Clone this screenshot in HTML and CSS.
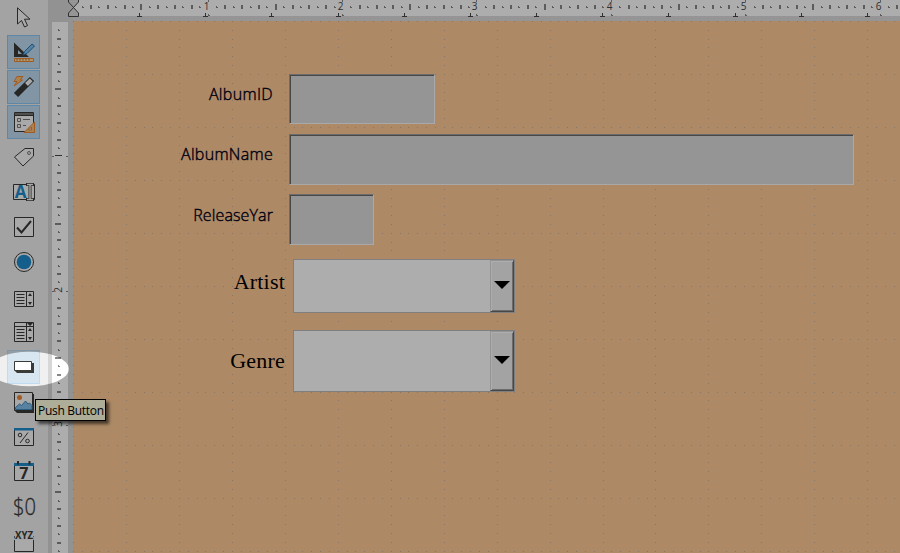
FILE: index.html
```html
<!DOCTYPE html>
<html lang="en">
<head>
<meta charset="utf-8">
<title>Form Design</title>
<link rel="stylesheet" href="styles.css">
</head>
<body>
<div class="app">
  <nav class="toolbar">
    <div class="tool"><svg viewBox="0 0 33 34"><path class="ln pale" d="M10.500 7.800V24l4-3.500 3 6.500 3-1.500-3-6.300h5.500z"/></svg></div>
    <div class="tool active"><svg viewBox="0 0 33 34"><path class="dk" fill-rule="evenodd" d="M7 7.500V22h15zM11 15v4h4z"/><path class="pencil" d="M17.500 16.500l7.500-7.500 2.500 2-7.500 7.500-4 1.500z"/><path class="orange rule" d="M7.500 23.500h19v3h-19z"/><path class="ticks" d="M10 24v1.500M13 24v1.500M16 24v1.500M19 24v1.500M22 24v1.500"/></svg></div>
    <div class="tool active"><svg viewBox="0 0 33 34"><path class="orange" d="M10 6.500h6l-3 3.500h2.500l-8.500 6 3-4.500H7z"/><path class="wand" d="M9 25L25 9"/><path class="wandtip" d="M19.500 14.500l4.700-4.700"/></svg></div>
    <div class="tool active"><svg viewBox="0 0 33 34"><path class="ln pale" d="M7.500 7.500h19v19h-19z"/><path class="bar" d="M8 8h18v2H8z"/><path class="ln" d="M8 10.500h18"/><path class="gray" d="M10.500 13.500h3v3h-3zM10.500 19.500h3v3h-3zM16 14.500h7M16 20.500h3"/><path class="orange" fill-rule="evenodd" d="M27.500 17v10.500H17zM24.500 22v3h-3z"/></svg></div>
    <div class="tool"><svg viewBox="0 0 33 34"><path class="ln pale" d="M7.500 17L18 8.500h8.500V16L16 26z"/><circle class="gray" cx="22" cy="13" r="1.500"/></svg></div>
    <div class="tool"><svg viewBox="0 0 33 34"><path class="ln pale" d="M6.500 9.500h21v15h-21z"/><text class="letter" x="7.800" y="22.500">A</text><path class="beam" d="M19 9.500h8M19 24.500h8M23 9v16"/><path class="beamcore" d="M20 9.500h6M20 24.500h6M23 9v16"/></svg></div>
    <div class="tool"><svg viewBox="0 0 33 34"><path class="ln pale" d="M7.500 7.500h19v19h-19z"/><path class="check" d="M10 17.500l4.500 5L24 11"/></svg></div>
    <div class="tool"><svg viewBox="0 0 33 34"><circle class="ln pale" cx="17" cy="17" r="9.500"/><circle class="blue" cx="17" cy="17" r="7.300"/></svg></div>
    <div class="tool"><svg viewBox="0 0 33 34"><path class="ln pale" d="M7.500 11.500h19v15h-19zM19.500 11.500v15M9.500 14.500h8M9.500 17.500h8M9.500 20.500h8M9.500 23.500h8"/><path class="dk" d="M21 16l2-3 2 3zM21 22l2 3 2-3z"/></svg></div>
    <div class="tool"><svg viewBox="0 0 33 34"><path class="ln pale" d="M7.500 7.500h19v19h-19zM7.500 11.500h19M19.500 7.500v19M9.500 14.500h8M9.500 17.500h8M9.500 20.500h8M9.500 23.500h8"/><path class="dk" d="M20 8h6l-3 3zM21 16l2-3 2 3zM21 22l2 3 2-3z"/></svg></div>
    <div class="tool hover"><svg viewBox="0 0 33 34"><path class="dk" d="M9 13h18v10H10l-2-2z"/><path class="ln white" d="M7.500 11.500h17v9h-17z"/></svg></div>
    <div class="tool"><svg viewBox="0 0 33 34"><path class="dk" d="M9 9h18v19H10l-2-2z"/><path class="ln pale" d="M7.500 7.500h18v18h-18z"/><circle class="sun" cx="12.500" cy="12.500" r="2.500"/><path class="hill" d="M8.500 24.500v-2l4-3.500 2 1.500 4-4.500 2.500 3 1.500-1 2.500 2.500v4z"/></svg></div>
    <div class="tool"><svg viewBox="0 0 33 34"><path class="ln pale" d="M7.500 8.500h19v17h-19z"/><path class="blue" d="M7 8h20v2.500H7z"/><circle class="ln" cx="13" cy="15" r="1.800"/><circle class="ln" cx="20.500" cy="21" r="1.800"/><path class="ln" d="M21 12.500l-8 10.500"/></svg></div>
    <div class="tool"><svg viewBox="0 0 33 34"><path class="ln pale" d="M7.500 8.500h19v17h-19z"/><path class="blue" d="M7 8h20v3H7z"/><path class="tabs" d="M11 6v3.500M22.500 6v3.500"/><text class="seven" x="12.300" y="23.800">7</text></svg></div>
    <div class="tool"><svg viewBox="0 0 33 34"><text class="money" x="6" y="24.500" textLength="23" lengthAdjust="spacingAndGlyphs">$0</text></svg></div>
    <div class="tool"><svg viewBox="0 0 33 34"><path class="ln pale" d="M8 11.500H7.500v15h19v-15H26"/><text class="xyz" x="8" y="14.300" textLength="18" lengthAdjust="spacingAndGlyphs">XYZ</text></svg></div>
  </nav>
  <div class="side"><svg id="vruler" width="16" height="531"></svg></div>
  <div class="main">
    <svg id="hruler" class="hruler" width="827" height="16"></svg>
    <main class="page">
      <svg id="grid" class="grid" width="827" height="532"></svg>
      <div class="row r1"><label class="l1">AlbumID</label><div class="field"></div></div>
      <div class="row r2"><label class="l2">AlbumName</label><div class="field"></div></div>
      <div class="row r3"><label class="l3">ReleaseYar</label><div class="field"></div></div>
      <div class="row r4"><label class="serif">Artist</label><div class="combo"><div class="drop"><svg width="16" height="8"><path d="M0 0h16L8 8z"/></svg></div></div></div>
      <div class="row r5"><label class="serif">Genre</label><div class="combo"><div class="drop"><svg width="16" height="8"><path d="M0 0h16L8 8z"/></svg></div></div></div>
    </main>
  </div>
  <svg class="indent" width="12" height="18"><path d="M.5-1v3l5 5.500 5-5.500V-1zM.5 16.500V13l5-5.500 5 5.500v3.500z"/></svg>
  <div class="tip"><span>Push Button</span></div>
  <svg class="dim" width="900" height="553"><path fill-rule="evenodd" d="M0 0H900V553H0zM-10.500 369a39.800 17.300 0 0 1 79.600 0a39.800 17.300 0 0 1-79.600 0z"/></svg>
</div>
<script src="rulers.js"></script>
</body>
</html>
```
FILE: styles.css
```css
body { margin: 0; }
.app { position: relative; display: flex; width: 900px; height: 553px; overflow: hidden; background: #dcdcdc; font-family: "Open Sans", "Noto Sans", sans-serif; }
.toolbar { flex: none; box-sizing: border-box; width: 48px; padding-left: 7px; background: #f0f0f0; display: flex; flex-direction: column; gap: 1px; }
.tool { flex: none; width: 33px; height: 34px; box-sizing: border-box; }
.tool svg { display: block; width: 33px; height: 34px; overflow: visible; }
.active { background: #c0dcf3; box-shadow: inset 0 0 0 1px #90c8f6; }
.hover { background: #d8e6f2; box-shadow: inset 0 0 0 1px #c0dcf3; }
.ln { fill: none; stroke: #3a3a38; stroke-width: 1; }
.ln.pale { fill: #fafafa; }
.ln.white { fill: #fff; }
.dk { fill: #3a3a38; }
.bar { fill: #797774; }
.gray { fill: none; stroke: #797774; }
.orange { fill: #f8c078; stroke: #ed8733; }
.rule { fill: #ffdfa0; }
.ticks { stroke: #b86a20; }
.pencil { fill: #83beec; stroke: #2477b0; }
.wand { stroke: #3a3a38; stroke-width: 6; }
.wandtip { stroke: #fafafa; stroke-width: 4; }
.blue { fill: #1e8bcd; }
.letter { font: bold 17px "Open Sans", sans-serif; fill: #1e8bcd; }
.beam { stroke: #3a3a38; stroke-width: 3; fill: none; }
.beamcore { stroke: #fafafa; stroke-width: 1.4; fill: none; }
.check { fill: none; stroke: #3a3a38; stroke-width: 2; }
.sun { fill: #ed8733; }
.hill { fill: #83beec; stroke: #4288b8; }
.tabs { stroke: #3a3a38; stroke-width: 2; }
.seven { font: bold 16px "Open Sans", sans-serif; fill: #3a3a38; }
.money { font: 300 23px "Open Sans", sans-serif; fill: #3a3a38; stroke: #3a3a38; stroke-width: .3; }
.xyz { font: bold 10px "Open Sans", sans-serif; fill: #3a3a38; stroke: #f0f0f0; stroke-width: 2; paint-order: stroke; }
.side { flex: none; box-sizing: border-box; width: 25px; padding: 22px 5px 0 4px; background: #d7d7d7; }
.side svg { display: block; background: #fff; }
.main { flex: none; width: 827px; display: flex; flex-direction: column; gap: 5px; }
.hruler { display: block; flex: none; background: #fff; overflow: visible; }
.tick { fill: #888; }
.tab { fill: #484848; }
.num { font: 10px "Open Sans", sans-serif; fill: #484848; text-anchor: middle; }
.page { position: relative; flex: none; box-sizing: border-box; height: 532px; padding-top: 53px; background: #ffcb97; }
.grid { position: absolute; inset: 0; }
.grid rect { fill: #c8b09a; }
.row { position: relative; display: flex; align-items: center; }
.row label { flex: none; box-sizing: border-box; width: 200px; text-align: right; font-size: 16px; color: #000018; line-height: 20px; white-space: nowrap; font-weight: 300; -webkit-text-stroke: .4px #000018; }
.row .l1 { letter-spacing: .35px; padding-bottom: 10px; }
.row .l2 { letter-spacing: .3px; padding-bottom: 12px; }
.row .l3 { letter-spacing: .12px; padding-bottom: 10px; }
.field { box-sizing: border-box; margin-left: 16px; height: 100%; background: #dcdcdc; border: 1px solid; border-color: #a0a0a0 #fafafa #fafafa #a0a0a0; box-shadow: inset 1px 1px #696969; }
.r1 { height: 50px; margin-bottom: 10px; }
.r1 .field { width: 146px; }
.r2 { height: 51px; margin-bottom: 9px; }
.r2 .field { width: 565px; }
.r3 { height: 51px; margin-bottom: 14px; }
.r3 .field { width: 85px; }
.row label.serif { width: 212px; font: 22px/26px "Liberation Serif", serif; color: #000; -webkit-text-stroke: 0; letter-spacing: .2px; }
.r4 { height: 54px; margin-bottom: 17px; }
.r4 label { padding-bottom: 9px; }
.r5 { height: 62px; }
.combo { box-sizing: border-box; margin-left: 8px; width: 222px; height: 100%; background: #fff; border: 1px solid #bcbcbc; display: flex; justify-content: flex-end; }
.drop { box-sizing: border-box; width: 24px; background: #f0f0f0; border: 1px solid; border-color: #dadada #696969 #696969 #dadada; box-shadow: inset 1px 1px #fff, inset -1px -1px #a0a0a0; display: flex; align-items: center; justify-content: center; }
.drop svg { display: block; margin: 0 1px 3px 0; }
.r4 .drop svg { margin-bottom: 0; margin-top: -2px; }
.indent { position: absolute; left: 68px; top: 0; overflow: hidden; }
.indent path { fill: #dcdcdc; stroke: #484848; }
.tip { position: absolute; left: 35px; top: 399px; box-sizing: border-box; width: 71px; height: 22px; border: 1px solid #000; background: #ffffe1; font-size: 12px; line-height: 22px; letter-spacing: -.3px; padding-left: 2px; white-space: nowrap; color: #000; box-shadow: 3px 3px 3px rgba(0,0,0,.6); }
.dim { position: absolute; left: 0; top: 0; pointer-events: none; }
.dim path { fill: rgba(0,0,0,.32); }
```
FILE: rulers.js
```js
const NS = 'http://www.w3.org/2000/svg';
const add = (parent, tag, attrs, text) => {
  const el = document.createElementNS(NS, tag);
  for (const k in attrs) el.setAttribute(k, attrs[k]);
  if (text) el.textContent = text;
  parent.appendChild(el);
};
const INCH = 134.4;
const rect = (p, x, y, width, height, cls) => add(p, 'rect', { x, y, width, height, class: cls });

const h = document.getElementById('hruler');
for (let i = 1; i < 100; i++) {
  const x = Math.round(i * INCH / 16 + 0.2);
  if (i % 16 === 0) {
    add(h, 'text', { x: x - 1.5, y: 10.4, class: 'num' }, String(i / 16));
    rect(h, x, 0, 1, 2, 'tick');
    rect(h, x, 14, 1, 2, 'tick');
    rect(h, x + 1, 15, 1, 1, 'tick');
  } else if (i % 8 === 0) {
    rect(h, x, 4, 2, 6, 'tick');
  } else if (i % 2 === 0) {
    rect(h, x, 5, 2, 4, 'tick');
  } else {
    rect(h, x, 6, 1, 2, 'tick');
    rect(h, x + 1, 7, 1, 1, 'tick');
  }
}
for (let i = 1; i < 13; i++) {
  const x = Math.round(i * 66.15);
  rect(h, x, 13, 1, 3, 'tab');
  rect(h, x - 2, 16, 5, 1, 'tab');
}

const v = document.getElementById('vruler');
for (let i = 1; i < 64; i++) {
  const y = Math.round(i * INCH / 16 - 1);
  if (i % 16 === 0) {
    const n = i / 16;
    if (n === 1) rect(v, 3, y, 7, 1, 'tab');
    else add(v, 'text', { x: 0, y: 0, class: 'num', transform: `translate(10 ${y}) rotate(-90)` }, String(n));
    rect(v, 0, y + 1, 2, 1, 'tick');
    rect(v, 14, y + 1, 2, 1, 'tick');
  } else if (i % 8 === 0) {
    rect(v, 3, y, 6, 2, 'tick');
  } else if (i % 2 === 0) {
    rect(v, 5, y, 4, 2, 'tick');
  } else {
    rect(v, 6, y, 1, 2, 'tick');
    rect(v, 7, y + 1, 1, 1, 'tick');
  }
}

const g = document.getElementById('grid');
const STEP = 52.95;
for (let a = 0; a < 16; a++) {
  for (let b = 0; b < 96; b++) {
    const major = Math.round(a * STEP);
    const minor = Math.round(b * STEP / 6);
    rect(g, major, minor, 1, 1);
    rect(g, minor, major, 1, 1);
  }
}
```
